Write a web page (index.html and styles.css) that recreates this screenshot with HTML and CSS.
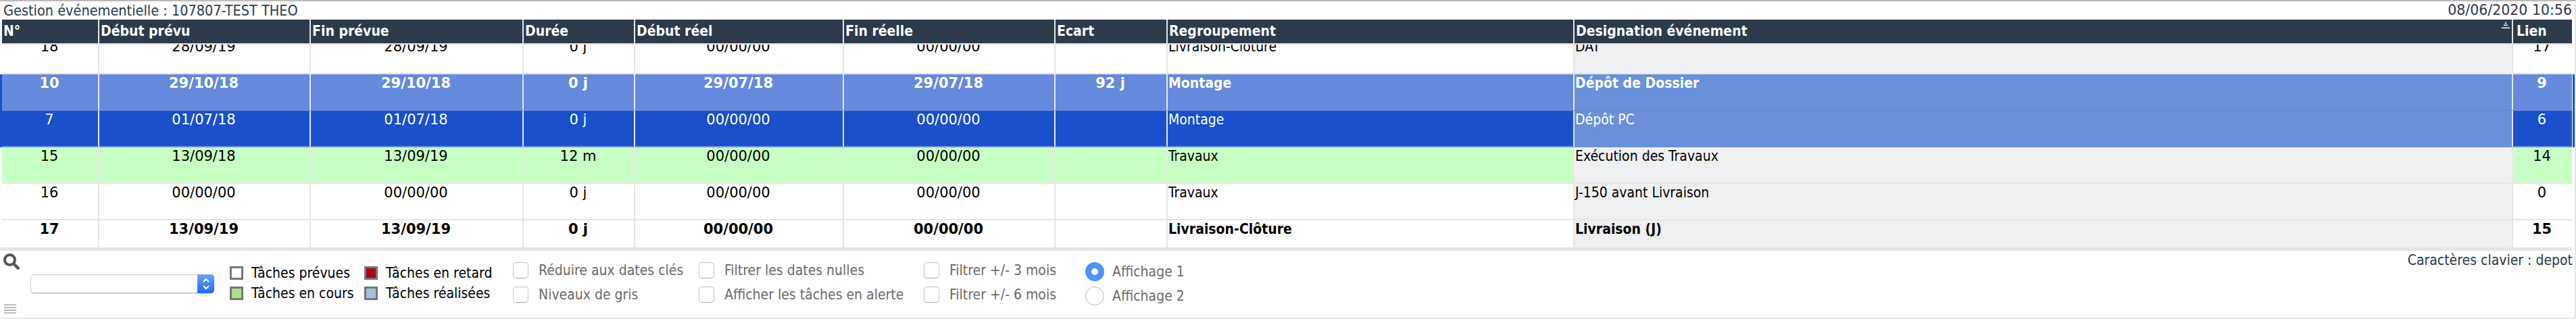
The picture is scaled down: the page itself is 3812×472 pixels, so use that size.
FILE: index.html
```html
<!DOCTYPE html>
<html lang="fr">
<head>
<meta charset="utf-8">
<title>Gestion événementielle</title>
<link rel="stylesheet" href="styles.css">
</head>
<body>
<div class="page">
  <div class="titlebar"><span class="title">Gestion événementielle : 107807-TEST THEO</span><span>08/06/2020 10:56</span></div>
  <div class="thead row-grid">
    <div class="th">N°</div><div class="th">Début prévu</div><div class="th">Fin prévue</div><div class="th">Durée</div><div class="th">Début réel</div><div class="th">Fin réelle</div><div class="th">Ecart</div><div class="th">Regroupement</div>
    <div class="th sorted">Designation événement
      <svg class="sort" width="12" height="10" viewBox="0 0 12 10"><path d="M6 0 7.500 3h-3Z M3 4.500h6v1.500H3Z M0 8.500h12V10H0Z" fill="#fff"/></svg>
    </div>
    <div class="th">Lien</div>
  </div>
  <div class="gap"></div>
  <div class="viewport">
    <div class="rows">
      <div class="row row-grid">
        <div class="c ctr">18</div><div class="c ctr">28/09/19</div><div class="c ctr">28/09/19</div><div class="c ctr">0 j</div><div class="c ctr">00/00/00</div><div class="c ctr">00/00/00</div><div class="c ctr"></div><div class="c txt">Livraison-Clôture</div><div class="c txt des">DAT</div><div class="c ctr">17</div>
      </div>
      <div class="row row-grid done">
        <div class="c ctr">10</div><div class="c ctr">29/10/18</div><div class="c ctr">29/10/18</div><div class="c ctr">0 j</div><div class="c ctr">29/07/18</div><div class="c ctr">29/07/18</div><div class="c ctr">92 j</div><div class="c txt">Montage</div><div class="c txt des">Dépôt de Dossier</div><div class="c ctr">9</div>
      </div>
      <div class="row row-grid sel">
        <div class="c ctr">7</div><div class="c ctr">01/07/18</div><div class="c ctr">01/07/18</div><div class="c ctr">0 j</div><div class="c ctr">00/00/00</div><div class="c ctr">00/00/00</div><div class="c ctr"></div><div class="c txt">Montage</div><div class="c txt des">Dépôt PC</div><div class="c ctr">6</div>
      </div>
      <div class="row row-grid cur">
        <div class="c ctr">15</div><div class="c ctr">13/09/18</div><div class="c ctr">13/09/19</div><div class="c ctr">12 m</div><div class="c ctr">00/00/00</div><div class="c ctr">00/00/00</div><div class="c ctr"></div><div class="c txt">Travaux</div><div class="c txt des">Exécution des Travaux</div><div class="c ctr">14</div>
      </div>
      <div class="row row-grid">
        <div class="c ctr">16</div><div class="c ctr">00/00/00</div><div class="c ctr">00/00/00</div><div class="c ctr">0 j</div><div class="c ctr">00/00/00</div><div class="c ctr">00/00/00</div><div class="c ctr"></div><div class="c txt">Travaux</div><div class="c txt des">J-150 avant Livraison</div><div class="c ctr">0</div>
      </div>
      <div class="row row-grid strong">
        <div class="c ctr">17</div><div class="c ctr">13/09/19</div><div class="c ctr">13/09/19</div><div class="c ctr">0 j</div><div class="c ctr">00/00/00</div><div class="c ctr">00/00/00</div><div class="c ctr"></div><div class="c txt">Livraison-Clôture</div><div class="c txt des">Livraison (J)</div><div class="c ctr">15</div>
      </div>
    </div>
  </div>
  <div class="band"></div>
  <div class="footer">
    <div class="tools">
      <svg class="loupe" width="26" height="26" viewBox="0 0 26 26"><circle cx="10.500" cy="10.500" r="7.500" fill="none" stroke="#555" stroke-width="4"/><path d="M16 16l8 8" stroke="#555" stroke-width="4.500"/></svg>
      <div class="select"><span class="select-btn"><svg width="12" height="20" viewBox="0 0 12 20"><path d="M2 7 6 3l4 4M2 13l4 4 4-4" fill="none" stroke="#fff" stroke-width="2"/></svg></span></div>
      <div class="handle"><i></i><i></i><i></i><i></i></div>
    </div>
    <div class="legend">
      <div class="lg"><span class="sw"></span>Tâches prévues</div>
      <div class="lg"><span class="sw red"></span>Tâches en retard</div>
      <div class="lg"><span class="sw green"></span>Tâches en cours</div>
      <div class="lg"><span class="sw blue"></span>Tâches réalisées</div>
    </div>
    <div class="opts opts-a">
      <label class="opt"><span class="box"></span>Réduire aux dates clés</label>
      <label class="opt"><span class="box"></span>Niveaux de gris</label>
    </div>
    <div class="opts opts-b">
      <label class="opt"><span class="box"></span>Filtrer les dates nulles</label>
      <label class="opt"><span class="box"></span>Afficher les tâches en alerte</label>
    </div>
    <div class="opts opts-c">
      <label class="opt"><span class="box"></span>Filtrer +/- 3 mois</label>
      <label class="opt"><span class="box"></span>Filtrer +/- 6 mois</label>
    </div>
    <div class="opts opts-d">
      <label class="opt"><span class="radio on"></span>Affichage 1</label>
      <label class="opt"><span class="radio"></span>Affichage 2</label>
    </div>
    <div class="keys">Caractères clavier : depot</div>
  </div>
</div>
</body>
</html>
```
FILE: styles.css
```css
* { box-sizing: border-box; }
html, body { margin: 0; padding: 0; background: #fff; }
body { font-family: "DejaVu Sans", sans-serif; font-size: 21px; color: #000; }
.page {
  width: 3812px; height: 472px; overflow: hidden;
  border-top: 2px solid #bbb; border-bottom: 2px solid #e6e6e6; border-right: 2px solid #e6e6e6;
  display: flex; flex-direction: column;
}
.titlebar {
  height: 27px; padding: 0 4px 0 5px; display: flex; justify-content: space-between; align-items: center;
  font-size: 20.500px; line-height: 27px; color: #2c3a4b;
}
.title { font-size: 21.500px; font-stretch: condensed; }
.row-grid {
  display: grid;
  grid-template-columns: 144px 313px 315px 165px 309px 313px 166px 602px 1389px 87px;
  border-left: 3px solid transparent; border-right: 3px solid transparent;
}
.thead { height: 35px; }
.th {
  background: #2c3a4b; color: #fff; font-weight: 700; font-size: 21px; font-stretch: condensed; line-height: 35px;
  padding-left: 2px; border-right: 2px solid #e6e6e6; white-space: nowrap; position: relative;
}
.th:last-child { border-right: 0; padding-left: 5px; }
.sort { position: absolute; right: 3px; top: 3px; }
.gap { height: 2px; background: #e6e6e6; margin: 0 3px; }
.viewport { height: 300px; overflow: hidden; }
.rows { margin-top: -10px; }
.row { height: 54px; }
.c {
  height: 54px; line-height: 26px; border-right: 2px solid #e6e6e6; border-bottom: 2px solid #e6e6e6;
  padding-left: 1px; white-space: nowrap;
}
.c:last-child { border-right: 0; }
.ctr { text-align: center; padding-left: 0; padding-right: 2px; }
.txt { font-stretch: condensed; }
.des { background: #eff0f2; }
.done { border-left-color: #1a50cc; border-right-color: #1a50cc; color: #fff; font-weight: 700; }
.done .c { background: #6589dd; border-bottom-color: #6589dd; }
.sel { border-left-color: #1a50cc; border-right-color: #1a50cc; color: #fff; }
.sel .c { background: #1a50cc; border-bottom-color: #6b90da; }
.done .des { background: #6a90da; border-bottom-color: #668bd5; }
.sel .des { background: #6a90da; border-bottom-color: #6a90da; }
.cur .c { background: #c8ffc4; }
.cur .des { background: #eff0f2; }
.strong { font-weight: 700; }
.band { height: 5px; background: #e6e6e6; margin: 0 4px 0 0; flex: none; }
.footer { flex: 1; display: flex; align-items: flex-start; position: relative; color: #6b6b6b; font-size: 21px; font-stretch: condensed; }
.tools { width: 340px; padding-left: 4px; display: flex; flex-direction: column; height: 99px; }
.loupe { margin-top: 3px; flex: none; }
.select {
  margin: 6px 0 0 41px; width: 272px; height: 28px; flex: none; background: #fff;
  border: 1px solid #d0d0d0; border-bottom-color: #aaa; border-radius: 5px; display: flex; justify-content: flex-end;
  box-shadow: 0 1px 1px rgba(0,0,0,.08);
}
.select-btn {
  width: 25px; height: 28px; margin: -1px -1px 0 0; border-radius: 0 5px 5px 0; flex: none;
  background: linear-gradient(#6aa6fb, #1d6cf5); display: flex; align-items: center; justify-content: center;
}
.handle { margin: 16px 0 0 2px; width: 18px; display: flex; flex-direction: column; gap: 2px; }
.handle i { display: block; height: 2px; background: #bbb; }
.legend {
  margin-top: 23px; width: 419px; display: grid; grid-template-columns: 199px 220px; row-gap: 10px; color: #000;
}
.lg { display: flex; align-items: center; height: 20px; white-space: nowrap; }
.sw { width: 20px; height: 20px; border: 3px solid #777; background: #fff; margin-right: 12px; flex: none; }
.sw.red { background: #ab0014; }
.sw.green { background: #aee283; }
.sw.blue { background: #a9bfe2; }
.opts { margin-top: 17px; display: flex; flex-direction: column; gap: 12px; }
.opts-a { width: 275px; }
.opts-b { width: 333px; }
.opts-c { width: 239px; }
.opts-d { margin-top: 17px; gap: 8px; }
.opt { display: flex; align-items: center; height: 24px; white-space: nowrap; }
.box {
  width: 23px; height: 24px; border: 1px solid #c4c4c4; border-bottom-color: #aaa; border-radius: 5px;
  background: #fff; margin-right: 15px; flex: none;
}
.opts-d .opt { height: 28px; }
.radio {
  width: 28px; height: 28px; border: 1px solid #bbb; border-radius: 50%; margin-right: 12px; flex: none; background: #fff;
}
.radio.on { border: 9px solid #4a94fb; }
.keys { position: absolute; right: 3px; top: 1px; color: #2c3a4b; line-height: 26px; }
```
